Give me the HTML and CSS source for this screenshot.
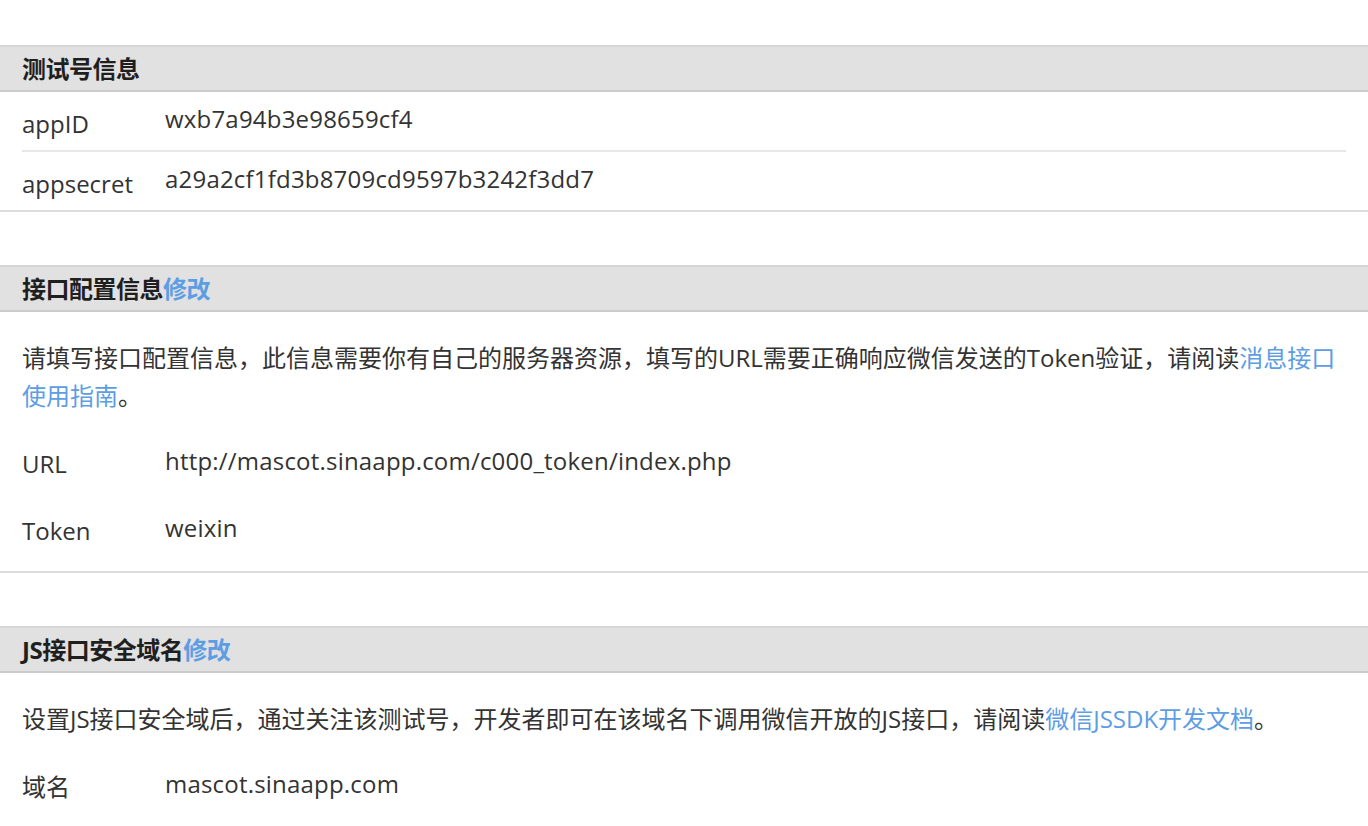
FILE: index.html
```html
<!DOCTYPE html>
<html lang="zh-CN">
<head>
<meta charset="utf-8">
<title>测试号管理</title>
<link rel="stylesheet" href="styles.css">
</head>
<body>
<div class="page">
  <section class="panel">
    <h2 class="panel-title">测试号信息</h2>
    <div class="info-table">
      <div class="info-row">
        <div class="label">appID</div>
        <div class="value">wxb7a94b3e98659cf4</div>
      </div>
      <div class="info-row">
        <div class="label">appsecret</div>
        <div class="value">a29a2cf1fd3b8709cd9597b3242f3dd7</div>
      </div>
    </div>
  </section>

  <section class="panel">
    <h2 class="panel-title">接口配置信息<a class="link" href="#">修改</a></h2>
    <div class="panel-body">
      <p class="desc">请填写接口配置信息，此信息需要你有自己的服务器资源，填写的URL需要正确响应微信发送的Token验证，请阅读<a class="link" href="#">消息接口使用指南</a>。</p>
      <div class="form-row">
        <div class="label">URL</div>
        <div class="value">http://mascot.sinaapp.com/c000_token/index.php</div>
      </div>
      <div class="form-row">
        <div class="label">Token</div>
        <div class="value">weixin</div>
      </div>
    </div>
  </section>

  <section class="panel">
    <h2 class="panel-title">JS接口安全域名<a class="link" href="#">修改</a></h2>
    <div class="panel-body">
      <p class="desc">设置JS接口安全域后，通过关注该测试号，开发者即可在该域名下调用微信开放的JS接口，请阅读<a class="link" href="#">微信JSSDK开发文档</a>。</p>
      <div class="form-row">
        <div class="label">域名</div>
        <div class="value">mascot.sinaapp.com</div>
      </div>
    </div>
  </section>
</div>
</body>
</html>
```

FILE: styles.css
```css
html, body {
  margin: 0;
  padding: 0;
  background: #ffffff;
}

body {
  font-family: "Open Sans", "Noto Sans CJK SC", sans-serif;
  font-size: 24px;
  color: #333333;
}

.page {
  padding-top: 45px;
  display: flex;
  flex-direction: column;
  gap: 53px;
}

.panel {
  border-bottom: 2px solid #dcdcdc;
}

.panel-title {
  margin: 0;
  height: 43px;
  line-height: 43px;
  padding-left: 22px;
  font-size: 24px;
  font-weight: bold;
  color: #1f1f1f;
  background: #e1e1e1;
  border-top: 2px solid #d6d6d6;
  border-bottom: 2px solid #cbcbcb;
  font-family: "Open Sans", "Noto Sans CJK SC", sans-serif;
  letter-spacing: -0.5px;
}

.link {
  color: #5d9de4;
  text-decoration: none;
}

.panel-title .link {
  font-weight: bold;
}

.info-table {
  margin: 0 22px;
}

.info-row {
  display: flex;
  height: 58px;
  align-items: flex-start;
}

.info-row + .info-row {
  border-top: 2px solid #e8e8e8;
}

.label {
  width: 143px;
  flex: none;
  line-height: 34px;
  padding-top: 15px;
}

.value {
  line-height: 34px;
  padding-top: 10px;
  letter-spacing: 0.2px;
}

.panel-body {
  padding: 27px 22px 23px;
}

.desc {
  margin: 0 0 32px;
  line-height: 38px;
}

.form-row {
  display: flex;
  align-items: flex-start;
}

.form-row + .form-row {
  margin-top: 33px;
}

.form-row .label {
  padding-top: 0;
}

.form-row .value {
  padding-top: 0;
  margin-top: -3px;
}
```
